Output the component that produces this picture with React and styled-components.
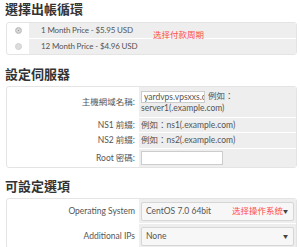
import React from 'react';
import styled, { createGlobalStyle } from 'styled-components';

const GlobalStyle = createGlobalStyle`
  html, body {
    margin: 0;
    padding: 0;
    background: #fff;
  }
  body {
    font-family: Lato, "Noto Sans CJK TC", sans-serif;
    color: #555;
  }
`;

const Page = styled.div`
  width: 300px;
  height: 247px;
  overflow: hidden;
  padding: 0 3px 0 6px;
  box-sizing: border-box;
`;

const Title = styled.h3`
  margin: ${p => p.$top || 0}px 0 ${p => p.$bottom || 4}px -1px;
  font-family: "Noto Sans CJK TC", sans-serif;
  font-size: 13px;
  line-height: 17px;
  height: 17px;
  font-weight: 700;
  color: #333;
`;

const Box = styled.div`
  position: relative;
  display: grid;
  grid-template-columns: ${p => p.$label}px 1fr;
  row-gap: 1px;
  background: #fff;
  border: 1px solid #e4e4e4;
  border-radius: 3px;
`;

const LabelCell = styled.div`
  display: flex;
  align-items: center;
  justify-content: ${p => (p.$center ? 'center' : 'flex-end')};
  padding-right: ${p => (p.$center ? 0 : 4)}px;
  font-size: 8.5px;
  line-height: 11px;
  color: #555;
  white-space: nowrap;
  overflow: hidden;
`;

const ValueCell = styled.div`
  display: flex;
  align-items: center;
  height: ${p => p.$h}px;
  padding: ${p => p.$pad || '0 2px'};
  background: #eeeeee;
  font-size: 8.5px;
  line-height: 11px;
  color: #555;
  box-sizing: border-box;
  overflow: hidden;
`;

const Stack = styled.div`
  line-height: 11px;
`;

const Radio = styled.span`
  width: 7px;
  height: 7px;
  border-radius: 50%;
  background: ${p => (p.$checked ? '#777' : '#dcdcdc')};
  box-shadow: ${p => (p.$checked ? 'inset 0 0 0 2px #d8d8d8' : 'none')};
  border: 1px solid #d0d0d0;
  box-sizing: border-box;
`;

const PriceText = styled.span`
  padding-left: 10px;
  font-size: 8px;
  letter-spacing: -0.15px;
  color: #555;
`;

const TextInput = styled.input`
  display: inline-block;
  vertical-align: middle;
  width: ${p => p.$w}px;
  height: ${p => p.$h || 12}px;
  margin: 0 3px 0 0;
  padding: 0 0 0 2px;
  background: #fff;
  border: 1px solid #ccc;
  border-radius: 0;
  box-sizing: border-box;
  font-family: Lato, sans-serif;
  font-size: 8.5px;
  color: #555;
  outline: none;
`;

const SelectBox = styled.div`
  display: flex;
  align-items: center;
  justify-content: space-between;
  width: 100%;
  height: 19px;
  padding: 0 4px;
  box-sizing: border-box;
  background: #f7f7f7;
  border: 1px solid #d6d6d6;
  border-radius: 2px;
  font-size: 8.5px;
  color: #555;
`;

const Arrow = styled.span`
  font-size: 5px;
  color: #444;
  margin-right: 1px;
`;

const Note = styled.span`
  position: absolute;
  left: ${p => p.$x}px;
  top: ${p => p.$y}px;
  font-family: "Noto Sans CJK SC", sans-serif;
  font-size: 8.5px;
  line-height: 11px;
  color: #ff4b4b;
  white-space: nowrap;
`;

const prices = [
  { label: '1 Month Price - $5.95 USD', checked: true },
  { label: '12 Month Price - $4.96 USD', checked: false },
];

export default function App() {
  return (
    <Page>
      <GlobalStyle />
      <Title $top={0} $bottom={5}>選擇出帳循環</Title>
      <Box $label={22}>
        {prices.map(p => (
          <React.Fragment key={p.label}>
            <LabelCell $center>
              <Radio $checked={p.checked} />
            </LabelCell>
            <ValueCell $h={15}>
              <PriceText>{p.label}</PriceText>
            </ValueCell>
          </React.Fragment>
        ))}
        <Note $x={146} $y={6}>选择付款周期</Note>
      </Box>

      <Title $top={10} $bottom={4}>設定伺服器</Title>
      <Box $label={132}>
        <LabelCell>主機網域名稱:</LabelCell>
        <ValueCell $h={30} $pad="2px 2px">
          <Stack>
            <TextInput $w={64} readOnly value="yardvps.vpsxxs.com" />例如：
            <br />
            server1(.example.com)
          </Stack>
        </ValueCell>
        <LabelCell>NS1 前綴:</LabelCell>
        <ValueCell $h={14}>例如：ns1(.example.com)</ValueCell>
        <LabelCell>NS2 前綴:</LabelCell>
        <ValueCell $h={15}>例如：ns2(.example.com)</ValueCell>
        <LabelCell>Root 密碼:</LabelCell>
        <ValueCell $h={18}>
          <TextInput $w={82} $h={14} readOnly value="" />
        </ValueCell>
      </Box>

      <Title $top={9} $bottom={4}>可設定選項</Title>
      <Box $label={132}>
        <LabelCell>Operating System</LabelCell>
        <ValueCell $h={24}>
          <SelectBox>
            <span>CentOS 7.0 64bit</span>
            <Arrow>▼</Arrow>
          </SelectBox>
        </ValueCell>
        <LabelCell>Additional IPs</LabelCell>
        <ValueCell $h={24}>
          <SelectBox>
            <span>None</span>
            <Arrow>▼</Arrow>
          </SelectBox>
        </ValueCell>
        <Note $x={225} $y={6}>选择操作系统</Note>
      </Box>
    </Page>
  );
}
